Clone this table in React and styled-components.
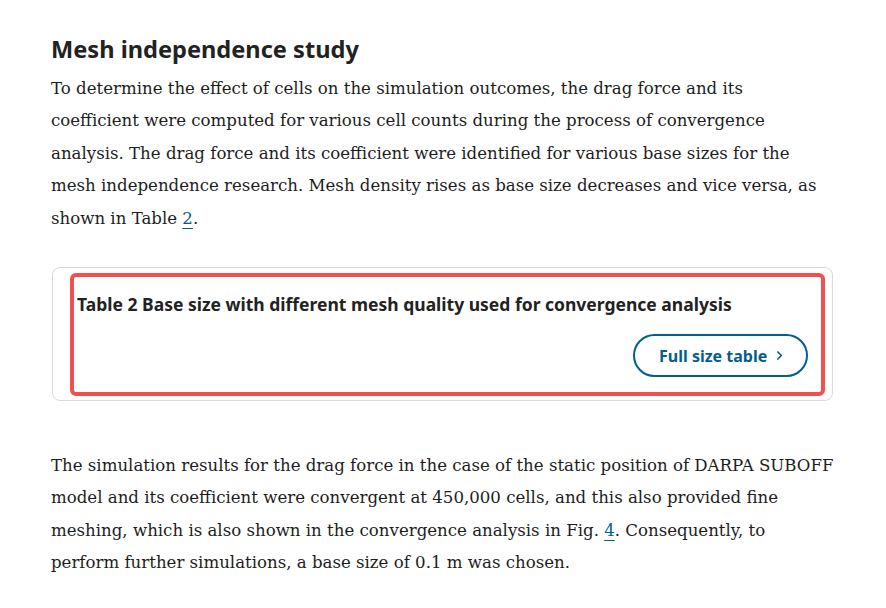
import styled, { createGlobalStyle } from "styled-components";

const GlobalStyle = createGlobalStyle`
  html, body {
    margin: 0;
    padding: 0;
    background: #fff;
  }
  body {
    font-family: "DejaVu Serif", "Liberation Serif", serif;
    color: #222;
  }
`;

const App = () => {
  return (
    <>
      <GlobalStyle />
      <Article>
        <Heading>Mesh independence study</Heading>
        <Para>
          To determine the effect of cells on the simulation outcomes, the drag
          force and its
          <br />
          coefficient were computed for various cell counts during the process
          of convergence
          <br />
          analysis. The drag force and its coefficient were identified for
          various base sizes for the
          <br />
          mesh independence research. Mesh density rises as base size decreases
          and vice versa, as
          <br />
          shown in Table <Ref href="#tab2">2</Ref>.
        </Para>

        <TableCard>
          <Highlight>
            <TableTitle>
              Table 2 Base size with different mesh quality used for convergence
              analysis
            </TableTitle>
            <Actions>
              <PillButton href="#tab2">
                Full size table
                <Chevron viewBox="0 0 10 10" aria-hidden="true">
                  <path d="M3.5 1.8 L6.7 5 L3.5 8.2" />
                </Chevron>
              </PillButton>
            </Actions>
          </Highlight>
        </TableCard>

        <Para>
          The simulation results for the drag force in the case of the static
          position of DARPA SUBOFF
          <br />
          model and its coefficient were convergent at 450,000 cells, and this
          also provided fine
          <br />
          meshing, which is also shown in the convergence analysis in Fig.{" "}
          <Ref href="#fig4">4</Ref>. Consequently, to
          <br />
          perform further simulations, a base size of 0.1 m was chosen.
        </Para>
      </Article>
    </>
  );
};

const Article = styled.main`
  width: 800px;
  padding: 33px 0 0 51px;
`;

const Heading = styled.h2`
  margin: 0 0 8px;
  font-family: "Noto Sans", "Open Sans", sans-serif;
  font-size: 23.6px;
  font-weight: 700;
  line-height: 32px;
  color: #222;
`;

const Para = styled.p`
  margin: 0;
  font-size: 16.6px;
  line-height: 32.4px;
  color: #1d1d1d;
  white-space: nowrap;
`;

const Ref = styled.a`
  color: #025e8d;
  text-decoration: underline;
  text-underline-offset: 4px;
  text-decoration-thickness: 1px;
`;

const TableCard = styled.section`
  box-sizing: border-box;
  margin: 32px 0 49px 1px;
  width: 781px;
  padding: 5px 7px 4px 17px;
  border: 1px solid #d5dce0;
  border-radius: 8px;
`;

const Highlight = styled.div`
  box-sizing: border-box;
  height: 123px;
  padding: 15px 13px 15px 3px;
  border: 4px solid #f25050;
  border-radius: 6px;
  display: flex;
  flex-direction: column;
  justify-content: space-between;
`;

const TableTitle = styled.h3`
  margin: 0;
  font-family: "Noto Sans", "Open Sans", sans-serif;
  font-size: 17.5px;
  font-weight: 700;
  line-height: 24px;
  color: #222;
`;

const Actions = styled.div`
  display: flex;
  justify-content: flex-end;
`;

const PillButton = styled.a`
  box-sizing: border-box;
  display: inline-flex;
  align-items: center;
  gap: 7px;
  width: 175px;
  height: 43px;
  padding: 0 0 0 24px;
  border: 2px solid #025e8d;
  border-radius: 22px;
  font-family: "Noto Sans", "Open Sans", sans-serif;
  font-size: 16px;
  font-weight: 700;
  color: #025e8d;
  text-decoration: none;
`;

const Chevron = styled.svg`
  width: 11px;
  height: 11px;
  fill: none;
  stroke: currentColor;
  stroke-width: 1.5;
  stroke-linecap: round;
  stroke-linejoin: round;
`;

export default App;
